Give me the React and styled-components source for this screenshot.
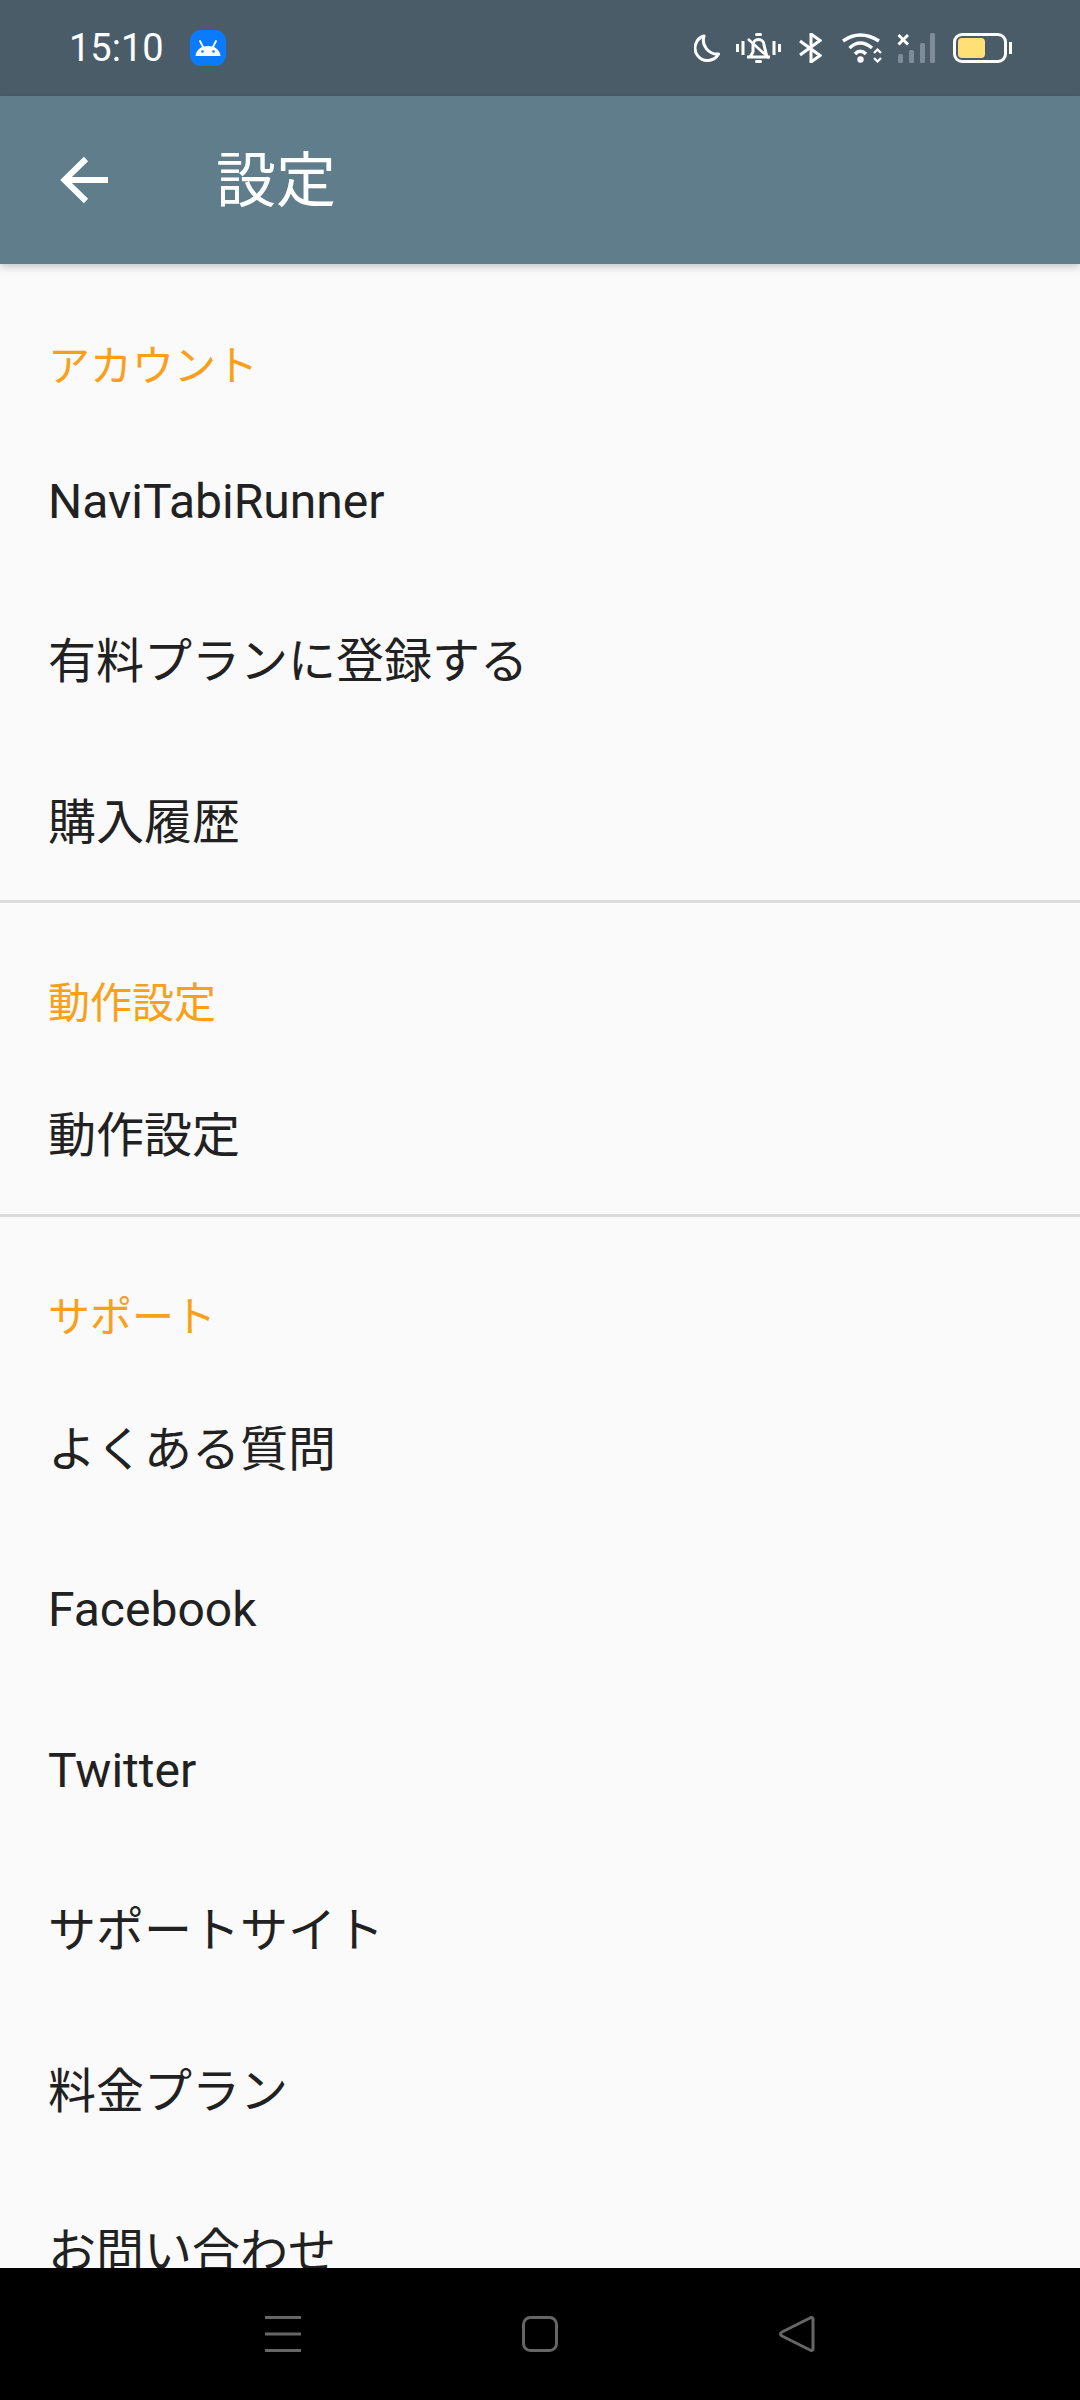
import React from "react";
import styled, { createGlobalStyle } from "styled-components";

const GlobalStyle = createGlobalStyle`
  html, body {
    margin: 0;
    padding: 0;
    background: #fafafa;
  }
  * {
    box-sizing: border-box;
  }
`;

const FONT = `Roboto, "Noto Sans CJK JP", sans-serif`;

const sections = [
  { title: "アカウント", items: ["NaviTabiRunner", "有料プランに登録する", "購入履歴"] },
  { title: "動作設定", items: ["動作設定"] },
  {
    title: "サポート",
    items: ["よくある質問", "Facebook", "Twitter", "サポートサイト", "料金プラン", "お問い合わせ"]
  }
];

function App() {
  return (
    <Screen>
      <GlobalStyle />
      <StatusBar>
        <StatusLeft>
          <Clock>15:10</Clock>
          <AppBadge>
            <svg width="26" height="16" viewBox="0 0 26 16">
              <path d="M0.500 16c.5-6 5.500-10 12.500-10s12 4 12.500 10z" fill="#fff" />
              <path d="M5 1l3 6M21 1l-3 6" stroke="#fff" strokeWidth="1.800" strokeLinecap="round" />
              <circle cx="7.500" cy="11.500" r="1.300" fill="#0a7bff" />
              <circle cx="18.500" cy="11.500" r="1.300" fill="#0a7bff" />
            </svg>
          </AppBadge>
        </StatusLeft>
        <StatusRight>
          <StatusIcon width="26" height="30" viewBox="0 0 26 30" fill="none">
            <path d="M10 3A12.500 12.500 0 1 0 24.500 21A14 14 0 0 1 10 3z" stroke="#fff" strokeWidth="3" strokeLinejoin="round" />
          </StatusIcon>
          <StatusIcon $gap={16} width="45" height="30" viewBox="0 0 45 30" fill="none">
            <path d="M1.500 11v8M7 8v14M38 8v14M43.500 11v8" stroke="#fff" strokeWidth="3" />
            <path d="M11 24h23M14 24l3-5v-7a5.500 5.500 0 0 1 11 0l3 12" stroke="#fff" strokeWidth="3" strokeLinejoin="round" />
            <path d="M20.500 1.500h4M20.500 28.500h4" stroke="#fff" strokeWidth="3" strokeLinecap="round" />
            <path d="M12 6l21 19" stroke="#fff" strokeWidth="2.500" />
          </StatusIcon>
          <StatusIcon $gap={18} width="23" height="30" viewBox="0 0 23 30" fill="none">
            <path d="M1 8l20 14.500-9 6.500V1l9 6.500L1 22" stroke="#fff" strokeWidth="3" />
          </StatusIcon>
          <StatusIcon $gap={20} width="40" height="30" viewBox="0 0 40 30" fill="none">
            <path d="M1 8Q18-4 37 8M7.500 15Q18 5 30 15M13 21Q18 15.500 24 21" stroke="#fff" strokeWidth="3.500" />
            <circle cx="18.500" cy="26.500" r="3.200" fill="#fff" />
            <path d="M32 20l3.500-3.500L39 20M32 25l3.500 3.500L39 25" stroke="#fff" strokeWidth="2.200" />
          </StatusIcon>
          <StatusIcon $gap={15} width="38" height="30" viewBox="0 0 38 30" fill="none">
            <path d="M1.500 2l9.500 9.500M11 2l-9.500 9.500" stroke="#fff" strokeWidth="3" />
            <rect x="1" y="21" width="5" height="9" rx="1.500" fill="#7d8c96" />
            <rect x="12" y="17" width="5" height="13" rx="1.500" fill="#7d8c96" />
            <rect x="23" y="10" width="5" height="20" rx="1.500" fill="#7d8c96" />
            <rect x="33" y="0" width="5" height="30" rx="1.500" fill="#7d8c96" />
          </StatusIcon>
          <Battery>
            <BatteryBody>
              <BatteryFill />
            </BatteryBody>
            <BatteryCap />
          </Battery>
        </StatusRight>
      </StatusBar>

      <Toolbar>
        <BackIcon width="48" height="48" viewBox="0 0 48 48" fill="none">
          <path d="M48 24H4M26 3L4.500 24 26 45" stroke="#fff" strokeWidth="6" />
        </BackIcon>
        <Title>設定</Title>
      </Toolbar>

      <Content>
        {sections.map((section, i) => (
          <Section key={section.title} $last={i === sections.length - 1}>
            <SectionTitle $first={i === 0}>{section.title}</SectionTitle>
            {section.items.map(item => (
              <Row key={item}>{item}</Row>
            ))}
          </Section>
        ))}
      </Content>

      <NavBar>
        <svg width="36" height="36" viewBox="0 0 36 36">
          <path d="M0 1.500h36M0 18h36M0 34.500h36" stroke="#666" strokeWidth="3" />
        </svg>
        <svg width="36" height="36" viewBox="0 0 36 36" fill="none">
          <rect x="1.500" y="1.500" width="33" height="33" rx="7" stroke="#666" strokeWidth="3" />
        </svg>
        <svg width="36" height="36" viewBox="0 0 36 36" fill="none">
          <path d="M34 3v30c0 1.500-1.500 2-3 1L3 20c-2-1-2-3 0-4L31 2c1.500-1 3-.5 3 1z" stroke="#666" strokeWidth="3" strokeLinejoin="round" />
        </svg>
      </NavBar>
    </Screen>
  );
}

export default App;

const Screen = styled.div`
  width: 1080px;
  height: 2400px;
  display: flex;
  flex-direction: column;
  overflow: hidden;
  background: #fafafa;
  font-family: ${FONT};
`;

const StatusBar = styled.div`
  height: 96px;
  flex: none;
  display: flex;
  align-items: center;
  justify-content: space-between;
  padding: 0 68px 0 69px;
  background: #4a5c67;
`;

const StatusLeft = styled.div`
  display: flex;
  align-items: center;
  gap: 26px;
`;

const Clock = styled.span`
  color: #fff;
  font-size: 38px;
  line-height: 96px;
`;

const AppBadge = styled.div`
  width: 36px;
  height: 36px;
  border-radius: 11px;
  background: #0a7bff;
  display: flex;
  align-items: center;
  justify-content: center;
`;

const StatusRight = styled.div`
  display: flex;
  align-items: center;
`;

const StatusIcon = styled.svg`
  flex: none;
  margin-left: ${props => props.$gap || 0}px;
`;

const Battery = styled.div`
  display: flex;
  align-items: center;
  margin-left: 18px;
`;

const BatteryBody = styled.div`
  width: 54px;
  height: 30px;
  padding: 2px;
  border: 3px solid #fff;
  border-radius: 9px;
`;

const BatteryFill = styled.div`
  width: 27px;
  height: 100%;
  border-radius: 4px;
  background: #ffdf76;
`;

const BatteryCap = styled.div`
  width: 3px;
  height: 12px;
  margin-left: 2px;
  background: #fff;
`;

const Toolbar = styled.div`
  height: 168px;
  flex: none;
  position: relative;
  z-index: 1;
  display: flex;
  align-items: center;
  padding-left: 60px;
  background: #607d8b;
  box-shadow: 0 3px 8px rgba(0, 0, 0, 0.2);
`;

const BackIcon = styled.svg`
  flex: none;
`;

const Title = styled.h1`
  margin: 0 0 0 108px;
  padding-top: 4px;
  color: #fff;
  font-size: 60px;
  font-weight: 400;
  line-height: 1;
`;

const Content = styled.div`
  flex: 1;
  min-height: 0;
  overflow: hidden;
  padding-top: 1.500px;
`;

const Section = styled.section`
  border-bottom: ${props => (props.$last ? "none" : "3px solid #dcdcdc")};
`;

const SectionTitle = styled.div`
  padding: 71px 48px ${props => (props.$first ? 22 : 19)}px;
  color: #f9a01b;
  font-size: 42px;
  line-height: 60px;
`;

const Row = styled.div`
  height: 160.500px;
  padding: 0 48px;
  color: #212121;
  font-size: 48px;
  line-height: 166px;
  white-space: nowrap;
`;

const NavBar = styled.div`
  height: 132px;
  flex: none;
  position: relative;
  z-index: 1;
  display: flex;
  align-items: center;
  justify-content: space-between;
  padding: 0 265px;
  background: #000;
`;
